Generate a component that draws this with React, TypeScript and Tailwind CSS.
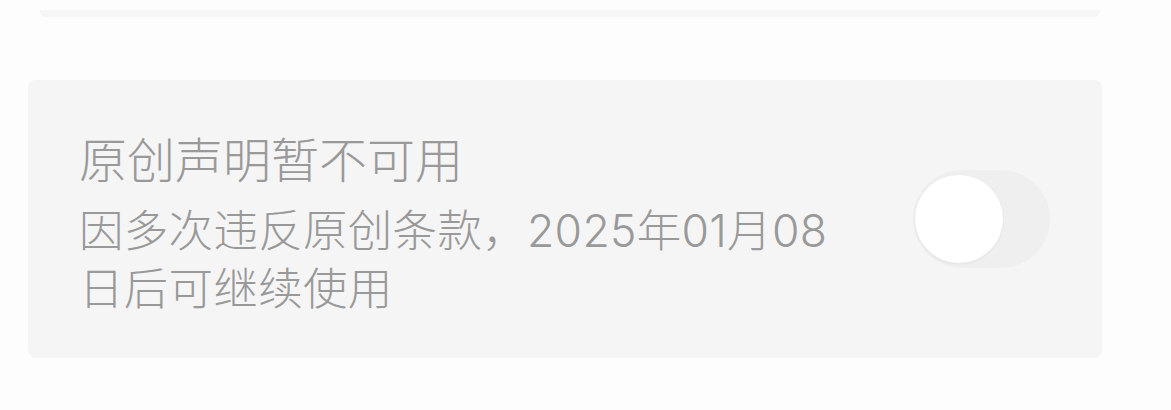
export default function App() {
  return (
    <div
      className="min-h-[410px] w-[1171px] bg-[#fdfdfd] pt-[10px]"
      style={{ fontFamily: 'Inter, "Noto Sans CJK SC", "Noto Sans", sans-serif' }}
    >
      {/* bottom edge of the card above */}
      <div className="mx-[40px] mr-[71px] h-[7px] rounded-b-[6px] bg-[#f6f6f6]" />

      <div className="mx-[28px] mt-[63px] mr-[69px] flex h-[278px] items-center justify-between rounded-[8px] bg-[#f5f5f5] pl-[51px] pr-[52px]">
        <div className="w-[780px] pt-[11px] font-light text-[#999999]">
          <p className="text-[48px] leading-[58px]">原创声明暂不可用</p>
          <p className="mt-[12px] text-[44.5px] leading-[58px] tracking-[0.3px]">
            因多次违反原创条款，2025年01月08日后可继续使用
          </p>
        </div>

        <div className="flex h-[98px] w-[137px] shrink-0 items-center rounded-full bg-[#efefef] px-[2px]">
          <span className="h-[88px] w-[88px] rounded-full bg-white shadow-[0_1px_3px_rgba(0,0,0,0.06)]" />
        </div>
      </div>
    </div>
  )
}
